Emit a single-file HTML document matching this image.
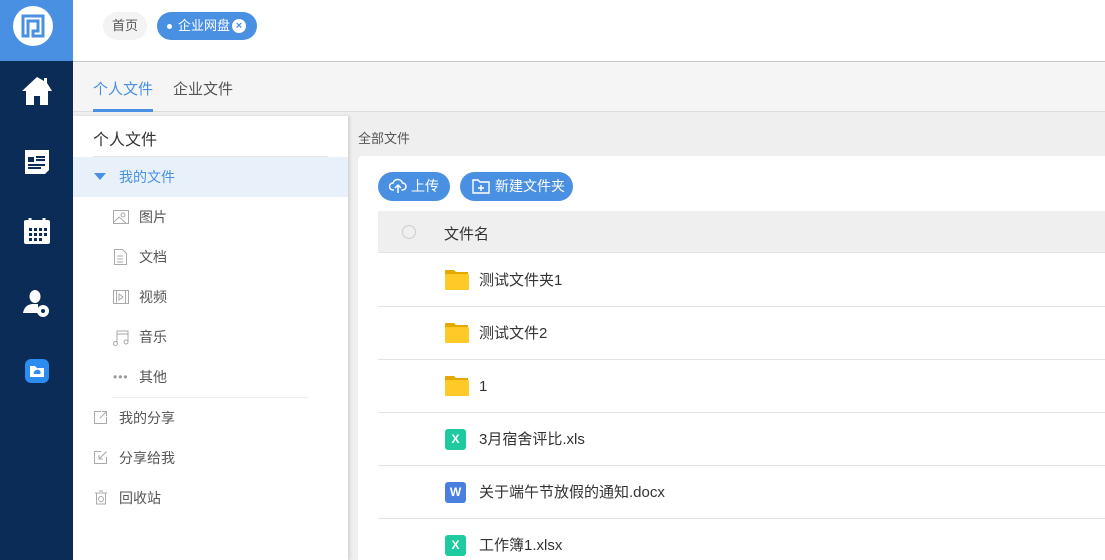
<!DOCTYPE html>
<html><head><meta charset="utf-8"><style>
*{margin:0;padding:0;box-sizing:border-box}
html,body{width:1105px;height:560px;overflow:hidden}
body{font-family:"Liberation Sans","Noto Sans CJK SC",sans-serif;background:#efefef;position:relative;font-size:14px;color:#333}
.nav{position:absolute;left:0;top:0;width:73px;height:560px;background:#0a2c57}
.logo{position:absolute;left:0;top:0;width:73px;height:61px;background:#4a90e2}
.logo .c{position:absolute;left:13px;top:6px;width:40px;height:40px;border-radius:50%;background:#fff}
.ic{position:absolute;left:0;width:73px;display:flex;justify-content:center}
.top{position:absolute;left:73px;top:0;right:0;height:62px;background:#fff;border-bottom:1px solid #c8c8c8}
.tag{position:absolute;top:12px;height:28px;border-radius:14px;font-size:13px;line-height:28px}
.tabs{position:absolute;left:73px;top:62px;right:0;height:50px;background:#f5f5f5;border-bottom:1px solid #ddd}
.tab{position:absolute;top:16px;font-size:15px}
.panel{position:absolute;left:73px;top:116px;width:275px;height:444px;background:#fff;box-shadow:2px 0 3px rgba(0,0,0,.12)}
.item{position:absolute;left:0;width:275px;height:40px;line-height:40px;font-size:14px;color:#555}
.card{position:absolute;left:358px;top:156px;right:0;bottom:0;background:#fff;border-radius:4px 0 0 0;overflow:hidden}
.btn{position:absolute;top:16px;height:29px;border-radius:15px;background:#4a90e2;color:#fff;font-size:14px;line-height:29px}
.row{position:absolute;left:20px;right:0;height:53px;border-bottom:1px solid #e3e3e3}
.row .name{position:absolute;left:101px;top:0;line-height:53px;font-size:15px;color:#333}
.row svg,.row .fi{position:absolute;left:67px;top:16px}
.fi{width:21px;height:21px;border-radius:3px;color:#fff;font-size:12px;font-weight:bold;text-align:center;line-height:21px}
</style></head><body>
<div class="nav">
 <div class="logo"><div class="c"><svg width="40" height="40" viewBox="0 0 40 40"><path d="M10 10h20v20h-10v-5h5v-10h-10v15h-5z" fill="none" stroke="#4a90e2" stroke-width="3"/></svg></div></div>
 <div class="ic" style="top:75px"><svg width="32" height="31" viewBox="0 0 32 31"><path d="M16 2 1 16h4v14h8v-9h6v9h8V16h4L26 8V3h-3v3z" fill="#fff"/></svg></div>
 <div class="ic" style="top:148px"><svg width="28" height="28" viewBox="0 0 28 28"><path d="M2 2h24v20l-4 4H2z" fill="#fff"/><rect x="5" y="9" width="6" height="5" fill="#0a2c57"/><path d="M13 9h9M13 12h9M5 17h17M5 20h13" stroke="#0a2c57" stroke-width="2"/></svg></div>
 <div class="ic" style="top:216px"><svg width="30" height="30" viewBox="0 0 30 30"><rect x="2" y="4" width="26" height="24" rx="2" fill="#fff"/><path d="M8 2v5M22 2v5" stroke="#fff" stroke-width="3"/><g fill="#0a2c57"><rect x="7" y="12" width="3" height="3"/><rect x="12" y="12" width="3" height="3"/><rect x="17" y="12" width="3" height="3"/><rect x="22" y="12" width="3" height="3"/><rect x="7" y="17" width="3" height="3"/><rect x="12" y="17" width="3" height="3"/><rect x="17" y="17" width="3" height="3"/><rect x="22" y="17" width="3" height="3"/><rect x="7" y="22" width="3" height="3"/><rect x="12" y="22" width="3" height="3"/><rect x="17" y="22" width="3" height="3"/></g></svg></div>
 <div class="ic" style="top:288px"><svg width="30" height="30" viewBox="0 0 30 30"><path d="M13 2a5.5 6.5 0 0 1 0 13a5.5 6.5 0 0 1 0-13z" fill="#fff"/><path d="M1 25c1-6 5-9 10-9h5v9z" fill="#fff"/><circle cx="21" cy="23" r="6" fill="#fff"/><circle cx="21" cy="23" r="2" fill="#0a2c57"/></svg></div>
 <div class="ic" style="top:359px"><svg width="24" height="24"><rect width="24" height="24" rx="6" fill="#2d8cf0"/><path d="M5 7h5l2 2h7v9H5z" fill="#fff"/><path d="M9 15a2 2 0 0 1 1-3 3 3 0 0 1 5 0 2 2 0 0 1 0 3z" fill="#2d8cf0"/></svg></div>
</div>
<div class="top">
 <div class="tag" style="left:30px;width:44px;background:#f3f3f3;color:#555;text-align:center">首页</div>
 <div class="tag" style="left:84px;width:100px;background:#4a90e2;color:#fff;padding-left:21px"><span style="position:absolute;left:10px;top:12px;width:5px;height:5px;border-radius:50%;background:#fff"></span>企业网盘<span style="position:absolute;left:75px;top:7px;width:14px;height:14px;border-radius:50%;background:#fff;color:#4a90e2;font-size:11px;line-height:14px;text-align:center;font-weight:bold">×</span></div>
</div>
<div class="tabs">
 <div class="tab" style="left:20px;color:#4a90e2">个人文件</div>
 <div style="position:absolute;left:20px;top:47px;width:60px;height:3px;background:#4a90e2"></div>
 <div class="tab" style="left:100px;color:#555">企业文件</div>
</div>
<div class="panel">
 <div style="position:absolute;left:20px;top:10px;font-size:16px;color:#333">个人文件</div>
 <div style="position:absolute;left:20px;top:40px;width:235px;height:1px;background:#e5e5e5"></div>
 <div class="item" style="top:41px;background:#e8f0fa;color:#4a90e2;padding-left:46px"><span style="position:absolute;left:21px;top:16px;border:6px solid transparent;border-top:7px solid #4a90e2;border-bottom:0"></span>我的文件</div>
 <div class="item" style="top:81px;padding-left:66px"><svg style="position:absolute;left:40px;top:13px" width="16" height="14"><rect x=".5" y=".5" width="15" height="13" fill="none" stroke="#aaa"/><circle cx="10" cy="5" r="2" fill="none" stroke="#aaa"/><path d="M1 12l5-5 7 6" fill="none" stroke="#aaa"/></svg>图片</div>
 <div class="item" style="top:121px;padding-left:66px"><svg style="position:absolute;left:41px;top:12px" width="13" height="16"><path d="M.5.5h8l4 4v11H.5z M3 7h6M3 10h6M3 13h6" fill="none" stroke="#aaa"/></svg>文档</div>
 <div class="item" style="top:161px;padding-left:66px"><svg style="position:absolute;left:40px;top:13px" width="16" height="14"><rect x=".5" y=".5" width="15" height="13" fill="none" stroke="#aaa"/><path d="M3.5 0v14M12.5 0v14M6 4v6l4-3z" fill="none" stroke="#aaa"/></svg>视频</div>
 <div class="item" style="top:201px;padding-left:66px"><svg style="position:absolute;left:40px;top:12px" width="16" height="17"><path d="M4 14V2h11v11M4 5h11" fill="none" stroke="#aaa"/><circle cx="2.5" cy="14.5" r="2" fill="none" stroke="#aaa"/><circle cx="13" cy="13" r="2" fill="none" stroke="#aaa"/></svg>音乐</div>
 <div class="item" style="top:241px;padding-left:66px"><span style="position:absolute;left:40px;top:0;color:#999;letter-spacing:1px;font-size:12px">•••</span>其他</div>
 <div style="position:absolute;left:40px;top:281px;width:195px;height:1px;background:#eee"></div>
 <div class="item" style="top:282px;padding-left:46px"><svg style="position:absolute;left:20px;top:12px" width="15" height="15"><path d="M8 1.5H1.5v12h12V7M9 1.5h4.5V6M13.5 1.5 7 8" fill="none" stroke="#aaa"/></svg>我的分享</div>
 <div class="item" style="top:322px;padding-left:46px"><svg style="position:absolute;left:20px;top:12px" width="15" height="15"><path d="M8 1.5H1.5v12h12V7M13.5 1.5 6 9M6 5v4h4" fill="none" stroke="#aaa"/></svg>分享给我</div>
 <div class="item" style="top:362px;padding-left:46px"><svg style="position:absolute;left:21px;top:12px" width="14" height="15"><path d="M1 3h12M5 1h4M2.5 3v11h9V3" fill="none" stroke="#aaa"/><circle cx="7" cy="9" r="2.5" fill="none" stroke="#aaa"/></svg>回收站</div>
</div>
<div style="position:absolute;left:358px;top:128px;font-size:13px;color:#555">全部文件</div>
<div class="card">
 <div class="btn" style="left:20px;width:72px;padding-left:33px"><svg style="position:absolute;left:11px;top:6px" width="18" height="16"><path d="M5 12H4a3.5 3.5 0 0 1 0-7 5 5 0 0 1 9.5 0 3.5 3.5 0 0 1 0 7h-1M9 15V7M6 10l3-3 3 3" fill="none" stroke="#fff" stroke-width="1.5"/></svg>上传</div>
 <div class="btn" style="left:102px;width:113px;padding-left:35px"><svg style="position:absolute;left:12px;top:7px" width="18" height="15"><path d="M1 1h5l2 2h9v11H1z M9 6v6M6 9h6" fill="none" stroke="#fff" stroke-width="1.4"/></svg>新建文件夹</div>
 <div style="position:absolute;left:20px;right:0;top:55px;height:42px;background:#efefef;border-bottom:1px solid #e3e3e3"><span style="position:absolute;left:24px;top:14px;width:14px;height:14px;border:1px solid #ccc;border-radius:50%"></span><span style="position:absolute;left:66px;top:12px;font-size:15px">文件名</span></div>
 <div class="row" style="top:98px"><svg width="24" height="21" viewBox="0 0 24 21" style="top:15px"><path d="M0 2a1 1 0 0 1 1-1h8l2 2h12v17H0z" fill="#e6a800"/><rect y="5" width="24" height="16" rx="1" fill="#ffca28"/></svg><span class="name">测试文件夹1</span></div>
 <div class="row" style="top:151px"><svg width="24" height="21" viewBox="0 0 24 21" style="top:15px"><path d="M0 2a1 1 0 0 1 1-1h8l2 2h12v17H0z" fill="#e6a800"/><rect y="5" width="24" height="16" rx="1" fill="#ffca28"/></svg><span class="name">测试文件2</span></div>
 <div class="row" style="top:204px"><svg width="24" height="21" viewBox="0 0 24 21" style="top:15px"><path d="M0 2a1 1 0 0 1 1-1h8l2 2h12v17H0z" fill="#e6a800"/><rect y="5" width="24" height="16" rx="1" fill="#ffca28"/></svg><span class="name">1</span></div>
 <div class="row" style="top:257px"><div class="fi" style="background:#1fcaa0;top:16px">X</div><span class="name">3月宿舍评比.xls</span></div>
 <div class="row" style="top:310px"><div class="fi" style="background:#4a7fe0;top:16px">W</div><span class="name">关于端午节放假的通知.docx</span></div>
 <div class="row" style="top:363px"><div class="fi" style="background:#1fcaa0;top:16px">X</div><span class="name">工作簿1.xlsx</span></div>
</div>
</body></html>
